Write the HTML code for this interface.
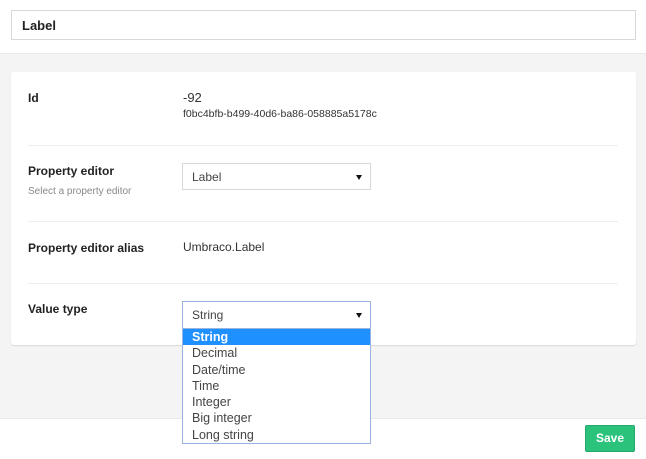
<!DOCTYPE html>
<html><head><style>
*{box-sizing:border-box;margin:0;padding:0}
body{width:646px;height:459px;overflow:hidden;background:#fff;font-family:"Liberation Sans",sans-serif;position:relative;color:#222}
.abs{position:absolute}
.hdr{left:0;top:0;width:646px;height:54px;background:#fff;border-bottom:1px solid #e9e9eb}
.name{left:11px;top:10px;width:625px;height:30px;border:1px solid #d8d7d9;font-size:13px;font-weight:bold;padding:7px 10px;background:#fff}
.bg{left:0;top:54px;width:646px;height:364px;background:#f4f4f5}
.card{left:11px;top:72px;width:625px;height:273px;background:#fff;box-shadow:0 1px 1px rgba(0,0,0,.12);border-radius:3px}
.lbl{font-size:12px;font-weight:bold;color:#222}
.desc{font-size:10px;color:#888}
.val{font-size:12px;color:#333}
.hr{left:28px;width:590px;height:1px;background:#eee}
.sel{border:1px solid #d8d7d9;font-size:12px;color:#444;padding:6px 9px;background:#fff}
.arr{position:absolute;right:8px;top:11px;width:0;height:0;border-left:3px solid transparent;border-right:3px solid transparent;border-top:5px solid #111}
.list{left:182px;top:328px;width:189px;height:116px;border:1px solid #9ab4e0;background:#fff;font-size:12.5px;color:#444}
.list div{height:16.3px;line-height:16px;padding-left:9px}
.list .on{background:#1e90ff;color:#fff;font-weight:bold}
.foot{left:0;top:418px;width:646px;height:41px;background:#fff;border-top:1px solid #e9e9eb}
.save{left:585px;top:425px;width:50px;height:27px;background:#2bc37c;border:1px solid #25a86b;color:#fff;font-weight:bold;font-size:12px;text-align:center;line-height:25px;border-radius:2px}
</style></head><body>
<div class="abs hdr"></div>
<div class="abs name">Label</div>
<div class="abs bg"></div>
<div class="abs card"></div>
<div class="abs lbl" style="left:28px;top:91px">Id</div>
<div class="abs val" style="left:183px;top:90px;font-size:13px">-92</div>
<div class="abs val" style="left:183px;top:108px;font-size:10.5px">f0bc4bfb-b499-40d6-ba86-058885a5178c</div>
<div class="abs hr" style="top:145px"></div>
<div class="abs lbl" style="left:28px;top:164px">Property editor</div>
<div class="abs desc" style="left:28px;top:186px">Select a property editor</div>
<div class="abs sel" style="left:182px;top:163px;width:189px;height:27px">Label<span class="arr"></span></div>
<div class="abs hr" style="top:221px"></div>
<div class="abs lbl" style="left:28px;top:241px">Property editor alias</div>
<div class="abs val" style="left:183px;top:240px">Umbraco.Label</div>
<div class="abs hr" style="top:283px"></div>
<div class="abs lbl" style="left:28px;top:302px">Value type</div>
<div class="abs foot"></div>
<div class="abs save">Save</div>
<div class="abs sel" style="left:182px;top:301px;width:189px;height:28px;border-color:#9ab4e0">String<span class="arr"></span></div>
<div class="abs list">
<div class="on">String</div><div>Decimal</div><div>Date/time</div><div>Time</div><div>Integer</div><div>Big integer</div><div>Long string</div>
</div>
</body></html>
